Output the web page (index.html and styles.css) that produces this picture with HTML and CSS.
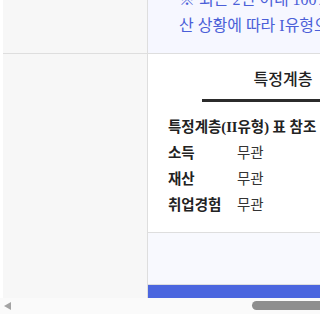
FILE: index.html
```html
<!DOCTYPE html>
<html lang="ko">
<head>
  <meta charset="UTF-8" />
  <title>청년 지원 대상</title>
  <link rel="stylesheet" href="styles.css">
</head>
<body>

  <div class="frame">
    <div class="table">
      <!-- note row (scrolled, top clipped) -->
      <div class="row row-note">
        <div class="side"></div>
        <div class="main note">
          <p>※ 최근 2년 이내 100% 이하 가구, 소득·재</p>
          <p>산 상황에 따라 I유형으로 분류될 수 있음</p>
        </div>
      </div>

      <div class="row">
        <div class="side"></div>
        <div class="main">
          <div class="cell">
            <div class="tabs">
              <button class="tab active">특정계층</button>
            </div>
            <div class="info">
              <div class="info-title">특정계층(II유형) 표 참조</div>
              <div class="info-row"><span class="label">소득</span><span class="value">무관</span></div>
              <div class="info-row"><span class="label">재산</span><span class="value">무관</span></div>
              <div class="info-row"><span class="label">취업경험</span><span class="value">무관</span></div>
            </div>
          </div>
          <div class="cell cell-foot"></div>
          <div class="cell-bar"></div>
        </div>
      </div>
    </div>

    <!-- horizontal scrollbar -->
    <div class="scrollbar">
      <span class="arrow"></span>
      <span class="thumb"></span>
    </div>
  </div>

</body>
</html>
```

FILE: styles.css
```css
body {
  margin: 0;
  background: #fff;
  font-family: "Liberation Serif", "Noto Sans CJK KR", serif;
  overflow: hidden;
}
.frame {
  width: 320px;
  height: 314px;
  overflow: hidden;
  position: relative;
}
.table {
  padding-left: 3px;
  width: 480px;
}
.row {
  display: flex;
}
.row-note {
  height: 53px;
  border-bottom: 1px solid #dedede;
  overflow: hidden;
}
.side {
  width: 144px;
  flex: none;
  background: #f7f7f7;
  border-right: 1px solid #dedede;
}
.main {
  flex: 1;
}
.note {
  background: #f6f7ff;
  padding-left: 31px;
  margin-top: -13px;
}
.note p {
  margin: 0;
  font-size: 16px;
  line-height: 26px;
  color: #4b5fd8;
  white-space: nowrap;
}
.cell {
  padding: 16px 20px 14px;
  border-bottom: 1px solid #dedede;
}
.tabs {
  display: flex;
  padding-left: 34px;
}
.tab {
  width: 162px;
  padding: 0 0 9px;
  background: none;
  border: none;
  border-bottom: 3px solid #2b2b2b;
  font-family: inherit;
  font-size: 16px;
  font-weight: 500;
  line-height: 20px;
  color: #222;
}
.info {
  margin-top: 12px;
}
.info-title,
.info-row {
  font-size: 14.5px;
  line-height: 26px;
  color: #222;
  white-space: nowrap;
}
.info-title {
  font-weight: 700;
}
.label {
  display: inline-block;
  width: 69px;
  font-weight: 700;
}
.value {
  color: #333;
}
.cell-foot {
  height: 51px;
  padding: 0;
  background: #f8f9fe;
}
.cell-bar {
  height: 13px;
  background: #4b66df;
}
.scrollbar {
  position: absolute;
  left: 0;
  right: 0;
  bottom: 0;
  height: 16px;
  background: #fafafa;
}
.arrow {
  position: absolute;
  left: 4px;
  top: 4px;
  width: 0;
  height: 0;
  border-top: 4px solid transparent;
  border-bottom: 4px solid transparent;
  border-right: 7px solid #a3a3a3;
}
.thumb {
  position: absolute;
  left: 252px;
  right: -10px;
  top: 3px;
  height: 9px;
  border-radius: 5px;
  background: #8e8e8e;
}
```
